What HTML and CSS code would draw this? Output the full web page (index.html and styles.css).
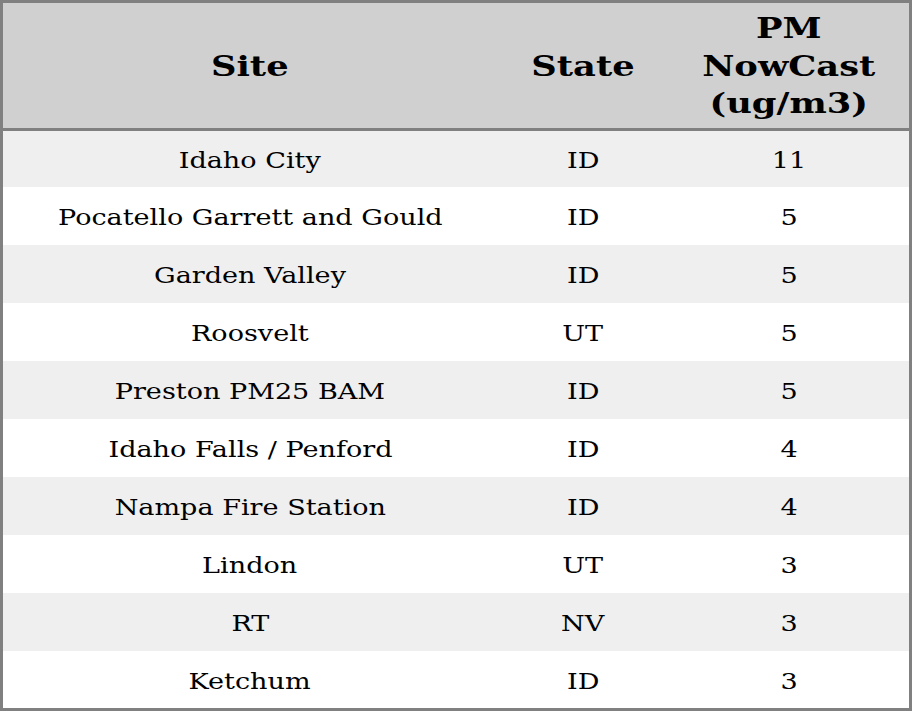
FILE: index.html
```html
<!DOCTYPE html>
<html>
<head>
<meta charset="utf-8">
<link rel="stylesheet" href="styles.css">
</head>
<body>
<table class="data">
  <thead>
    <tr><th class="c-site"><span class="tx">Site</span></th><th class="c-state"><span class="tx">State</span></th><th class="c-pm"><span class="tx">PM<br>NowCast<br>(ug/m3)</span></th></tr>
  </thead>
  <tbody>
    <tr><td><span class="tx">Idaho City</span></td><td><span class="tx">ID</span></td><td><span class="tx">11</span></td></tr>
    <tr><td><span class="tx">Pocatello Garrett and Gould</span></td><td><span class="tx">ID</span></td><td><span class="tx">5</span></td></tr>
    <tr><td><span class="tx">Garden Valley</span></td><td><span class="tx">ID</span></td><td><span class="tx">5</span></td></tr>
    <tr><td><span class="tx">Roosvelt</span></td><td><span class="tx">UT</span></td><td><span class="tx">5</span></td></tr>
    <tr><td><span class="tx">Preston PM25 BAM</span></td><td><span class="tx">ID</span></td><td><span class="tx">5</span></td></tr>
    <tr><td><span class="tx">Idaho Falls / Penford</span></td><td><span class="tx">ID</span></td><td><span class="tx">4</span></td></tr>
    <tr><td><span class="tx">Nampa Fire Station</span></td><td><span class="tx">ID</span></td><td><span class="tx">4</span></td></tr>
    <tr><td><span class="tx">Lindon</span></td><td><span class="tx">UT</span></td><td><span class="tx">3</span></td></tr>
    <tr><td><span class="tx">RT</span></td><td><span class="tx">NV</span></td><td><span class="tx">3</span></td></tr>
    <tr><td><span class="tx">Ketchum</span></td><td><span class="tx">ID</span></td><td><span class="tx">3</span></td></tr>
  </tbody>
</table>
</body>
</html>
```
FILE: styles.css
```css
html, body { margin: 0; padding: 0; background: #fff; }
.data {
  width: 912px;
  height: 711px;
  border-collapse: separate;
  border-spacing: 0;
  border: 3px solid #808080;
  box-sizing: border-box;
  font-family: "DejaVu Serif", serif;
  color: #000;
  table-layout: fixed;
}
.tx {
  display: inline-block;
  white-space: nowrap;
}
.data th {
  background: #d0d0d0;
  font-size: 28px;
  font-weight: bold;
  line-height: 37.5px;
  height: 123px;
  padding: 2px 0 0;
  text-align: center;
  vertical-align: middle;
  border-bottom: 3px solid #808080;
}
.data th .tx { transform: scaleX(1.26); }
.c-site { width: 494px; }
.c-state { width: 172px; }
.data td {
  font-size: 22px;
  text-align: center;
  vertical-align: middle;
  padding: 3px 0 0;
}
.data td .tx { transform: scaleX(1.23); }
.data tbody tr { height: 58px; }
.data tbody tr:first-child { height: 56px; }
.data tbody tr:last-child { height: 57px; }
.data tbody tr:nth-child(odd) td { background: #efefef; }
```
